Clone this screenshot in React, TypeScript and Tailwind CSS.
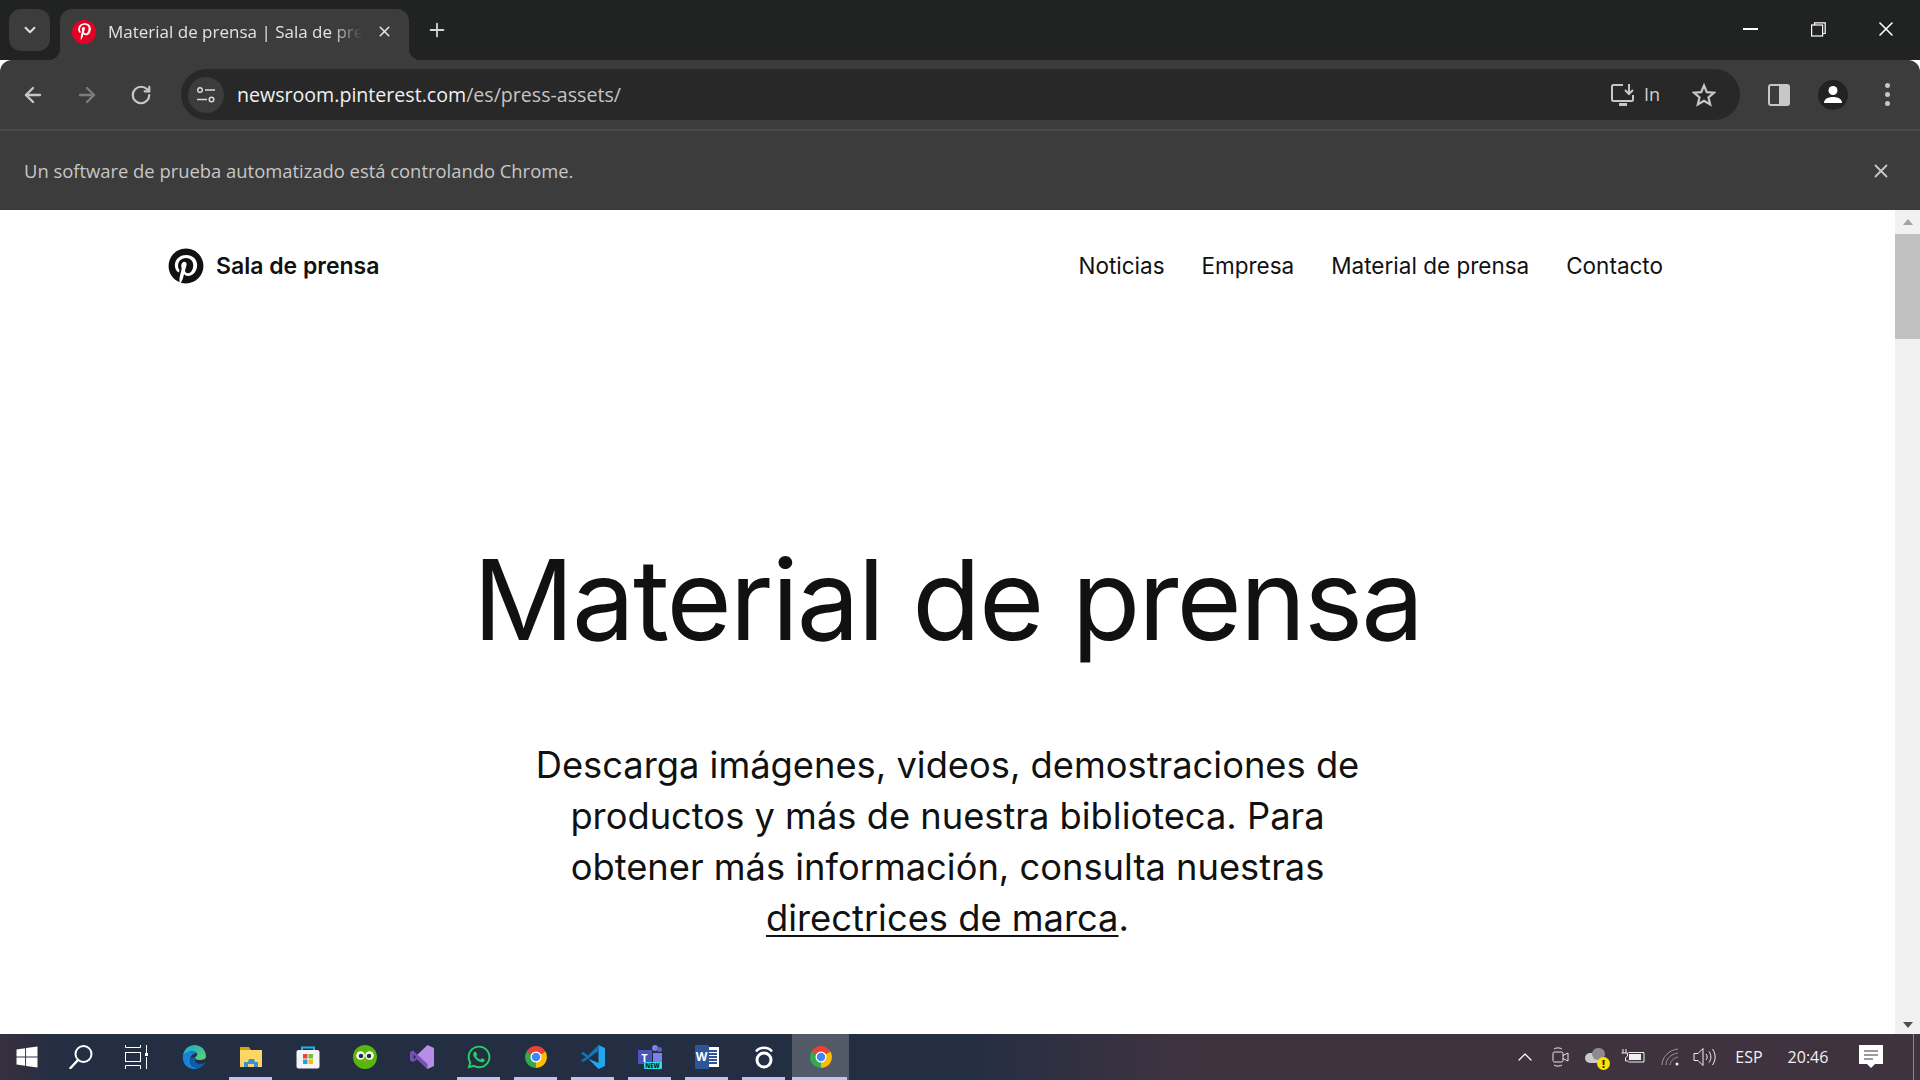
import React from 'react';
import { FaPinterest, FaPinterestP, FaWhatsapp, FaWindows } from 'react-icons/fa';
import { ChevronDown, X, Plus, ArrowLeft, ArrowRight, RotateCw, ChevronUp } from 'lucide-react';

const uiFont = "font-['Open_Sans','Noto_Sans',sans-serif]";
const pageFont = "font-['Inter','Noto_Sans',sans-serif]";

const ChromeLogo = () => (
  <svg width="24" height="24" viewBox="0 0 48 48">
    <path d="M24 24 L5 13 A22 22 0 0 1 43 13 Z" fill="#ea4335" />
    <path d="M24 24 L43 13 A22 22 0 0 1 24 46 Z" fill="#fbbc04" />
    <path d="M24 24 L24 46 A22 22 0 0 1 5 13 Z" fill="#34a853" />
    <circle cx="24" cy="24" r="11" fill="#fff" />
    <circle cx="24" cy="24" r="8.5" fill="#4285f4" />
  </svg>
);

const EdgeLogo = () => (
  <svg width="24" height="24" viewBox="0 0 24 24">
    <defs>
      <linearGradient id="edgeTop" x1="0" y1="0" x2="1" y2="1">
        <stop offset="0" stopColor="#1aa5d8" />
        <stop offset="1" stopColor="#5ed66b" />
      </linearGradient>
    </defs>
    <path d="M1 11C1.500 5 6 0 12.500 0C19 0 24 5 24 11.500C24 14 21 15 17.500 15C14.500 15 13 14 13 13C13 11.500 16 11 15 8.500C13.500 6 9 5.500 5.500 7.500C3 9 1.500 10 1 11Z" fill="url(#edgeTop)" />
    <path d="M1 11C0 17 4 24 12 24C14 24 15.500 23.500 17 23C11 23.500 7 19 8 14C8.500 11 11 8.500 14.500 8C11 5.500 3 6 1 11Z" fill="#1683d8" />
    <path d="M8 15C8 20 12.500 24 17.500 23C20 22 22.500 20 23.500 17.500C21 19 16 19.500 14 17.500C12.500 16 13 14 14 13C11 11.500 8.200 12 8 15Z" fill="#0f5ca8" />
  </svg>
);

const FilesLogo = () => (
  <svg width="24" height="22" viewBox="0 0 24 22">
    <path d="M1 1h9l2 3H1z" fill="#d99e09" />
    <rect x="1" y="4" width="22" height="17" fill="#fcd766" />
    <path d="M5 21v-5h4l1-3h5l1 3h3v5h-4v-3H9v3z" fill="#3b8fd6" />
  </svg>
);

const StoreLogo = () => (
  <svg width="24" height="24" viewBox="0 0 24 24">
    <path d="M6 7V2.500h12V7" fill="none" stroke="#1eb4ea" strokeWidth="2" />
    <rect x="0.500" y="5" width="23" height="18.500" rx="2" fill="#f4f4f4" />
    <rect x="7" y="9" width="4.500" height="4.500" fill="#ea4b2e" />
    <rect x="12.500" y="9" width="4.500" height="4.500" fill="#6ebf3c" />
    <rect x="7" y="14.500" width="4.500" height="4.500" fill="#1ea2e8" />
    <rect x="12.500" y="14.500" width="4.500" height="4.500" fill="#fdb900" />
  </svg>
);

const DuoLogo = () => (
  <svg width="24" height="24" viewBox="0 0 24 24">
    <circle cx="12" cy="12" r="12" fill="#58b70a" />
    <circle cx="7.500" cy="10.500" r="4.300" fill="#fff" />
    <circle cx="16.500" cy="10.500" r="4.300" fill="#fff" />
    <circle cx="8" cy="11" r="2.300" fill="#233" />
    <circle cx="16" cy="11" r="2.300" fill="#233" />
    <path d="M10.500 14.500h3L12 17z" fill="#f49000" />
  </svg>
);

const VisualStudioLogo = () => (
  <svg width="24" height="24" viewBox="0 0 24 24">
    <path d="M17.500 0L24 3v18l-6.500 3L7 14l10.500-9v14L7 10z" fill="#b88de6" />
    <path d="M0 7l3-1.500L17.500 19v5L7 14l-3.500 3L0 15.500z" fill="#7c4fb8" />
    <path d="M0 8l4 4-4 4z" fill="#7c4fb8" />
    <path d="M3.500 9.500v5L6 12z" fill="#232e42" />
  </svg>
);

const VSCodeLogo = () => (
  <svg width="24" height="24" viewBox="0 0 24 24">
    <path d="M17.500 0L24 3v18l-6.500 3L7 13.500 17.500 18V6z" fill="#24a6ee" />
    <path d="M17.500 0v6L7 13.500 2.500 17 0 15.500 5 12 0 8.500 2.500 7l4.500 3.500z" fill="#0b78c4" />
    <path d="M2.500 17L0 15.500 5 12l2 1.500z" fill="#0b6cb0" />
  </svg>
);

const TeamsLogo = () => (
  <div className="relative h-[24px] w-[24px]">
    <div className="absolute left-[14px] top-0 h-[6px] w-[6px] rounded-full bg-[#7b83eb]" />
    <div className="absolute right-0 top-[2px] h-[5px] w-[5px] rounded-full bg-[#5b5fc7]" />
    <div className="absolute right-0 top-[8px] h-[11px] w-[9px] rounded-b-[3px] bg-[#7b83eb]" />
    <div className="absolute left-0 top-[5px] flex h-[14px] w-[14px] items-center justify-center bg-[#4b53bc] text-[11px] leading-none font-bold text-white">
      T
    </div>
    <div className="absolute bottom-0 right-0 flex h-[7px] w-[18px] items-center justify-center rounded-[1px] bg-[#2fe0e8] text-[6px] leading-none font-extrabold text-[#10282c]">
      NEW
    </div>
  </div>
);

const WordLogo = () => (
  <div className="relative h-[24px] w-[24px]">
    <div className="absolute right-0 top-[2px] flex h-[20px] w-[13px] flex-col justify-center gap-[1px] bg-white px-[2px]">
      <div className="h-[2px] bg-[#2b579a]" />
      <div className="h-[2px] bg-[#2b579a]" />
      <div className="h-[2px] bg-[#2b579a]" />
      <div className="h-[2px] bg-[#2b579a]" />
      <div className="h-[2px] bg-[#2b579a]" />
    </div>
    <div className="absolute left-0 top-0 flex h-[24px] w-[14px] items-center justify-center rounded-[1px] bg-[#2b579a] text-[12px] leading-none font-bold text-white">
      W
    </div>
  </div>
);

const ObsLogo = () => (
  <svg width="20" height="24" viewBox="0 0 20 24" fill="none" stroke="#fff">
    <circle cx="10" cy="15" r="7" strokeWidth="3" />
    <path d="M2 6.500C6 1.500 14 1.500 18 6.500" strokeWidth="2.500" />
  </svg>
);

const TaskIcon = ({ children, running, active }: { children: React.ReactNode; running?: boolean; active?: boolean }) => (
  <div className={`relative flex h-full w-[57px] items-center justify-center ${active ? 'bg-[#525a68]' : ''}`}>
    {children}
    {running && <div className={`absolute bottom-0 h-[3px] bg-[#c5c0ee] ${active ? 'left-0 w-[55px]' : 'left-[7px] w-[43px]'}`} />}
  </div>
);

const Taskbar = () => (
  <div className={`flex h-[46px] shrink-0 items-center bg-[linear-gradient(90deg,#37303f_0%,#232e42_3%,#232e42_50%,#403340_62%,#403340_100%)] text-white ${uiFont}`}>
    <div className="flex h-full w-[54px] items-center justify-center">
      <FaWindows size={24} />
    </div>
    <div className="flex h-full w-[54px] items-center justify-center">
      <svg width="24" height="24" viewBox="0 0 24 24" fill="none" stroke="#fff">
        <circle cx="14.500" cy="9" r="8" strokeWidth="2" />
        <path d="M9 15L1.500 23" strokeWidth="2.500" strokeLinecap="round" />
      </svg>
    </div>
    <div className="mr-[1px] flex h-full w-[56px] items-center justify-center">
      <svg width="24" height="24" viewBox="0 0 24 24" fill="none" stroke="#fff" strokeWidth="1">
        <path d="M1.500 0v2.500h15V0M1.500 24v-3.500h15V24M22.500 0v8M22.500 12v12" />
        <rect x="1.500" y="7.500" width="15" height="9" />
        <rect x="21" y="8" width="3" height="3" fill="#fff" stroke="none" />
      </svg>
    </div>
    <TaskIcon><EdgeLogo /></TaskIcon>
    <TaskIcon running><FilesLogo /></TaskIcon>
    <TaskIcon><StoreLogo /></TaskIcon>
    <TaskIcon><DuoLogo /></TaskIcon>
    <TaskIcon><VisualStudioLogo /></TaskIcon>
    <TaskIcon running><FaWhatsapp size={26} color="#25d366" /></TaskIcon>
    <TaskIcon running><ChromeLogo /></TaskIcon>
    <TaskIcon running><VSCodeLogo /></TaskIcon>
    <TaskIcon running><TeamsLogo /></TaskIcon>
    <TaskIcon running><WordLogo /></TaskIcon>
    <TaskIcon running><ObsLogo /></TaskIcon>
    <TaskIcon running active><ChromeLogo /></TaskIcon>

    <div className="ml-auto flex h-full items-center">
      <div className="flex w-[37px] justify-center"><ChevronUp size={24} strokeWidth={1.2} /></div>
      <div className="flex w-[36px] justify-center">
        <svg width="18" height="22" viewBox="0 0 18 22" fill="none" stroke="#e8e8e8" strokeWidth="1">
          <rect x="1" y="6" width="10" height="10" rx="1.500" />
          <path d="M11 9.500l5-2.500v8l-5-2.500M2 3c2-1.500 6-1.500 8 0M2 19c2 1.500 6 1.500 8 0" />
        </svg>
      </div>
      <div className="flex w-[36px] justify-center">
        <div className="relative h-[20px] w-[24px]">
          <div className="absolute left-0 top-[6px] h-[10px] w-[16px] rounded-full bg-[#c9c9c9]" />
          <div className="absolute left-[7px] top-[1px] h-[12px] w-[13px] rounded-full bg-[#8d8a90]" />
          <div className="absolute bottom-[-3px] right-[-1px] flex h-[13px] w-[13px] items-center justify-center rounded-full bg-[#ffe200] text-[10px] leading-none font-extrabold text-[#222]">
            !
          </div>
        </div>
      </div>
      <div className="flex w-[36px] justify-center">
        <svg width="24" height="16" viewBox="0 0 24 16" fill="none" stroke="#f0f0f0" strokeWidth="1">
          <path d="M2 0v4M5 0v4M0.500 4h6v3l-2 2v3H7.500" />
          <path d="M7.500 3.500H23V13H7.500" />
          <rect x="8" y="5" width="12" height="6" fill="#f0f0f0" stroke="none" />
        </svg>
      </div>
      <div className="flex w-[37px] justify-center">
        <svg width="18" height="18" viewBox="0 0 18 18" fill="none" stroke="#9a959c" strokeWidth="1">
          <path d="M1 17C1 9 8 2 17 1M5 17c0-6 5-11 12-12M9 17c0-3 3-7 8-8" />
          <circle cx="16" cy="16" r="1.500" fill="#f0f0f0" stroke="none" />
        </svg>
      </div>
      <div className="flex w-[34px] justify-center">
        <svg width="24" height="20" viewBox="0 0 24 20" fill="none" stroke="#f0f0f0" strokeWidth="1">
          <path d="M1 6.500h4L10 1.500v17l-5-5H1z" />
          <path d="M13 7c1.500 2 1.500 4 0 6M16 4.500c2.500 3.500 2.500 7.500 0 11M19.500 2c3.500 5 3.500 11 0 16" />
        </svg>
      </div>
      <div className="w-[54px] text-center text-[16px] text-[#f2f2f2]">ESP</div>
      <div className="w-[64px] text-center text-[16px] text-[#f2f2f2]">20:46</div>
      <div className="flex w-[60px] justify-center pl-[2px]">
        <svg width="24" height="24" viewBox="0 0 24 24">
          <path d="M0 0h24v19h-8l-4 4-4-4H0z" fill="#fff" />
          <path d="M5 6h14M5 10h14M5 14h9" stroke="#403340" strokeWidth="1" />
        </svg>
      </div>
      <div className="ml-[13px] mr-[6px] h-full w-[1px] bg-[#8b858c]" />
    </div>
  </div>
);

const ChromeFrame = () => (
  <div className={`shrink-0 ${uiFont}`}>
    {/* tab strip */}
    <div className="flex h-[60px] items-end bg-[#212322]">
      <div className="mb-[9px] ml-[9px] flex h-[42px] w-[41px] items-center justify-center rounded-[12px] bg-[#3c3c3c]">
        <ChevronDown size={18} color="#e3e3e3" strokeWidth={2.5} />
      </div>
      <div className="relative ml-[10px] flex h-[51px] w-[349px] items-center rounded-t-[12px] bg-[#3c3c3c] pb-[6px] pl-[12px]">
        <div className="absolute bottom-0 left-[-12px] h-[12px] w-[12px] bg-[radial-gradient(circle_at_0_0,transparent_12px,#3c3c3c_12.5px)]" />
        <div className="absolute bottom-0 right-[-12px] h-[12px] w-[12px] bg-[radial-gradient(circle_at_100%_0,transparent_12px,#3c3c3c_12.5px)]" />
        <div className="flex h-[24px] w-[24px] shrink-0 items-center justify-center rounded-full bg-[#e60023]">
          <FaPinterestP size={17} color="#fff" />
        </div>
        <span className="ml-[12px] w-[254px] shrink-0 overflow-hidden text-[17px] font-medium whitespace-nowrap text-[#e3e3e3] [mask-image:linear-gradient(90deg,#000_88%,transparent_100%)]">
          Material de prensa | Sala de prensa
        </span>
        <X size={17} color="#e3e3e3" strokeWidth={2.2} className="ml-[14px] shrink-0" />
      </div>
      <Plus size={22} color="#d5d5d5" strokeWidth={2} className="mb-[19px] ml-[17px]" />
      <div className="mb-[19px] ml-auto flex items-center text-white">
        <div className="flex w-[68px] justify-center"><div className="h-0 w-[15px] border-t-[2px] border-white" /></div>
        <div className="flex w-[68px] justify-center">
          <svg width="15" height="15" viewBox="0 0 15 15" fill="none" stroke="#fff" strokeWidth="1.200">
            <rect x="0.600" y="3" width="11" height="11" />
            <path d="M3.500 3V0.800h10.700V11.500H12" />
          </svg>
        </div>
        <div className="flex w-[68px] justify-center"><X size={24} strokeWidth={1.6} /></div>
      </div>
    </div>
    {/* toolbar */}
    <div className="flex h-[69px] items-center rounded-t-[12px] bg-[#3c3c3c] pl-[21px] pr-[30px]">
      <ArrowLeft size={24} color="#c7c7c7" strokeWidth={2.4} />
      <ArrowRight size={24} color="#7c7c7c" strokeWidth={2.4} className="ml-[30px]" />
      <RotateCw size={22} color="#c7c7c7" strokeWidth={2.4} className="ml-[31px]" />
      <div className="ml-[29px] flex h-[51px] flex-1 items-center rounded-full bg-[#282828] pl-[7px] pr-[24px]">
        <div className="flex h-[36px] w-[36px] items-center justify-center rounded-full bg-[#3c3c3c]">
          <svg width="20" height="16" viewBox="0 0 20 16" fill="none" stroke="#d8d8d8" strokeWidth="1.500">
            <circle cx="4" cy="3" r="2.300" />
            <path d="M9 3h10M1 12.500h10" />
            <circle cx="15.500" cy="12.500" r="2.300" />
          </svg>
        </div>
        <span className="ml-[13px] text-[19.6px] text-[#f0f0f0]">
          newsroom.pinterest.com<span className="text-[#c4c4c4]">/es/press-assets/</span>
        </span>
        <div className="ml-auto flex items-center">
          <svg width="25" height="23" viewBox="0 0 25 23" fill="none" stroke="#c7c7c7" strokeWidth="2">
            <path d="M12 2H2.500A1.500 1.500 0 0 0 1 3.500v13A1.500 1.500 0 0 0 2.500 18h18a1.500 1.500 0 0 0 1.500-1.500V12" />
            <path d="M8 21.500h8" strokeWidth="3" />
            <path d="M18 1v9M14 7l4 4 4-4" />
          </svg>
          <span className="ml-[8px] text-[18px] font-medium text-[#d0d0d0]">In</span>
          <svg width="24" height="24" viewBox="0 0 24 24" fill="none" stroke="#c7c7c7" strokeWidth="2.200" className="ml-[32px]">
            <path d="M12 2.500l2.800 6.600 7.200.6-5.500 4.700 1.700 7-6.200-3.700-6.200 3.700 1.700-7L2 9.700l7.200-.6z" />
          </svg>
        </div>
      </div>
      <div className="ml-[28px] h-[22px] w-[22px] rounded-[3px] border-[2px] border-[#c7c7c7] bg-[linear-gradient(90deg,transparent_50%,#c7c7c7_50%)]" />
      <div className="ml-[28px] flex h-[30px] w-[30px] items-center justify-center rounded-full bg-[#212322]">
        <svg width="20" height="20" viewBox="0 0 20 20" fill="#fff">
          <circle cx="10" cy="5.500" r="4.500" />
          <path d="M1 18c0-4 4-6 9-6s9 2 9 6z" />
        </svg>
      </div>
      <div className="ml-[37px] flex flex-col gap-[4px]">
        <div className="h-[5px] w-[5px] rounded-full bg-[#c7c7c7]" />
        <div className="h-[5px] w-[5px] rounded-full bg-[#c7c7c7]" />
        <div className="h-[5px] w-[5px] rounded-full bg-[#c7c7c7]" />
      </div>
    </div>
    <div className="h-[2px] bg-[#4a4a4a]" />
    {/* automation infobar */}
    <div className="flex h-[79px] items-center justify-between bg-[#3c3c3c] pl-[24px] pr-[28px] shadow-[0_1px_2px_rgba(0,0,0,0.4)]">
      <span className="text-[18.4px] text-[#c7c7c7]">Un software de prueba automatizado está controlando Chrome.</span>
      <X size={22} color="#c7c7c7" strokeWidth={2} />
    </div>
  </div>
);

const navLinks = ['Noticias', 'Empresa', 'Material de prensa', 'Contacto'];

const Page = () => (
  <div className={`flex min-h-0 flex-1 bg-white ${pageFont}`}>
    <div className="flex-1 overflow-hidden text-[#111]">
      <header className="flex items-center justify-between pl-[168px] pr-[232px] pt-[38px]">
        <div className="flex items-center">
          <FaPinterest size={36} color="#111" />
          <span className="ml-[12px] text-[23px] font-semibold">Sala de prensa</span>
        </div>
        <nav className="flex gap-[37px] text-[22.5px]">
          {navLinks.map((link) => (
            <span key={link}>{link}</span>
          ))}
        </nav>
      </header>
      <h1 className="mt-[255px] text-center text-[112px] leading-[120px] font-normal tracking-[-2px]">Material de prensa</h1>
      <p className="mx-auto mt-[81px] w-[900px] text-center text-[36.3px] leading-[51px]">
        Descarga imágenes, videos, demostraciones de
        <br />
        productos y más de nuestra biblioteca. Para
        <br />
        obtener más información, consulta nuestras
        <br />
        <span className="underline decoration-2 underline-offset-[4px]">directrices de marca</span>.
      </p>
    </div>
    <div className="flex w-[25px] flex-col items-center bg-[#f1f1f1]">
      <div className="mt-[9px] h-0 w-0 border-x-[5px] border-b-[6px] border-x-transparent border-b-[#a3a3a3]" />
      <div className="mt-[9px] h-[105px] w-full bg-[#c1c1c1]" />
      <div className="mt-auto mb-[6px] h-0 w-0 border-x-[5px] border-t-[6px] border-x-transparent border-t-[#505050]" />
    </div>
  </div>
);

export default function App() {
  return (
    <div className="flex h-[1080px] w-[1920px] flex-col overflow-hidden">
      <ChromeFrame />
      <Page />
      <Taskbar />
    </div>
  );
}
